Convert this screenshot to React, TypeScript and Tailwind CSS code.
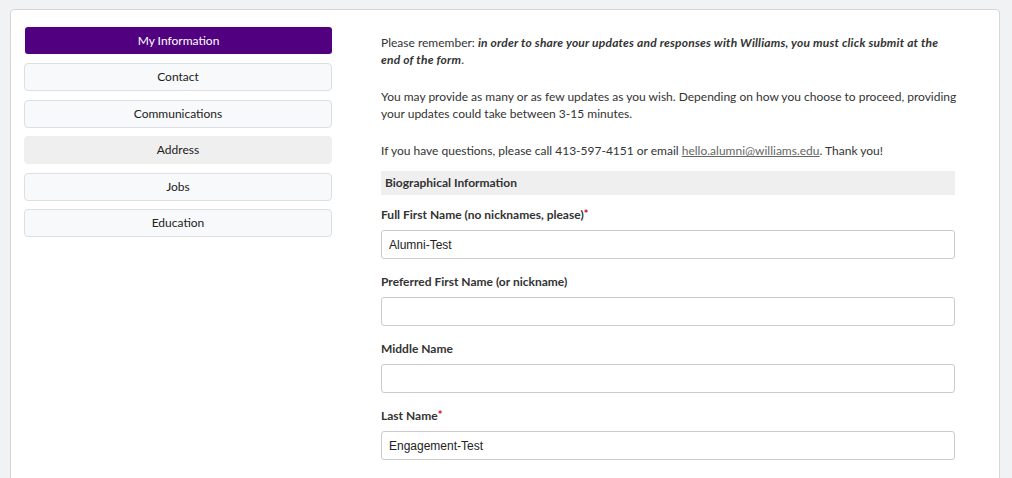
const navItems = ["My Information", "Contact", "Communications", "Address", "Jobs", "Education"]

const Field = ({ label, required, value }: { label: string; required?: boolean; value?: string }) => {
    return (
        <div className="flex flex-col">
            <label className="text-[12px] leading-[14px] font-bold text-[#333] h-[17px]">
                {label}
                {required && <span className="text-[#d0021b] text-[11px] leading-none align-top">*</span>}
            </label>
            <input
                readOnly
                value={value ?? ""}
                className="mt-[5px] h-[29px] w-full border border-[#cccccc] rounded-[3px] bg-white px-[7px] text-[12px] text-[#222] outline-none [font-family:'Liberation_Sans',Arial,sans-serif]"
            />
        </div>
    )
}

export default function App() {
    return (
        <div className="min-h-screen bg-[#f1f2f4] pl-[10px] pr-[12px] pt-[9px] [font-family:Lato,'Noto_Sans',sans-serif]">
            <main className="flex bg-white border border-[#d6d6d6] rounded-[4px] min-h-[520px] pl-[13px] pt-[17px]">
                <nav className="w-[308px] flex flex-col gap-[8.5px]">
                    {navItems.map((item, i) => {
                        if (i === 0) {
                            return (
                                <button key={item} className="h-[27px] w-[307px] ml-[1px] mb-[0.5px] rounded-[3px] bg-[#51007f] text-white text-[12px]">
                                    {item}
                                </button>
                            )
                        }
                        const active = item === "Address"
                        return (
                            <button
                                key={item}
                                className={
                                    active
                                        ? "h-[28px] rounded-[4px] bg-[#efefef] border border-[#efefef] text-[#222] text-[12px]"
                                        : "h-[28px] rounded-[4px] bg-[#f8f9fa] border border-[#dcdfe3] text-[#222] text-[12px]"
                                }
                            >
                                {item}
                            </button>
                        )
                    })}
                </nav>
                <section className="ml-[49px] w-[574px] pt-[7px] text-[12px] text-[#333]">
                    <p className="leading-[17px] mb-[20px]">
                        Please remember: <em className="font-bold tracking-[0.2px]">in order to share your updates and responses with Williams, you must click submit at the end of the form</em>.
                    </p>
                    <p className="leading-[17px] mb-[20px] w-[584px]">
                        You may provide as many or as few updates as you wish. Depending on how you choose to proceed, providing your updates could take between 3-15 minutes.
                    </p>
                    <p className="leading-[17px]">
                        If you have questions, please call 413-597-4151 or email <a className="underline text-[#666]">hello.alumni@williams.edu</a>. Thank you!
                    </p>
                    <div className="mt-[12px] h-[24px] bg-[#efefef] flex items-center px-[4px] font-bold">
                        Biographical Information
                    </div>
                    <div className="mt-[13px] flex flex-col gap-[16px]">
                        <Field label="Full First Name (no nicknames, please)" required value="Alumni-Test" />
                        <Field label="Preferred First Name (or nickname)" />
                        <Field label="Middle Name" />
                        <Field label="Last Name" required value="Engagement-Test" />
                    </div>
                </section>
            </main>
        </div>
    )
}
